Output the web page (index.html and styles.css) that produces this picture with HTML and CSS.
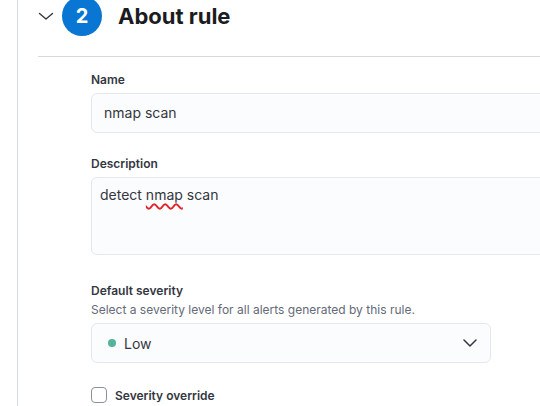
FILE: index.html
```html
<!DOCTYPE html>
<html>
<head>
<meta charset="utf-8">
<link rel="stylesheet" href="styles.css">
</head>
<body>
<div class="page">
  <div class="step">
    <div class="step-header">
      <span class="toggle">
        <svg width="16" height="16" viewBox="0 0 16 16"><path d="M1.5 5.5 L8 11 L14.5 5.5" fill="none" stroke="#343741" stroke-width="1.4" stroke-linecap="round" stroke-linejoin="round"/></svg>
      </span>
      <span class="step-number">2</span>
      <h2 class="step-title">About rule</h2>
    </div>
    <div class="form">
      <div class="row row-name">
        <label class="label">Name</label>
        <div class="input">nmap scan</div>
      </div>
      <div class="row row-desc">
        <label class="label">Description</label>
        <div class="textarea">detect <span class="misspelled">nmap</span> scan</div>
      </div>
      <div class="row row-sev">
        <label class="label">Default severity</label>
        <div class="help">Select a severity level for all alerts generated by this rule.</div>
        <div class="select">
          <span class="dot"></span>
          <span class="select-value">Low</span>
          <svg class="select-arrow" width="14" height="8" viewBox="0 0 14 8"><path d="M1 1 L7 7 L13 1" fill="none" stroke="#343741" stroke-width="1.5" stroke-linecap="round" stroke-linejoin="round"/></svg>
        </div>
      </div>
      <div class="row row-check">
        <span class="checkbox"></span>
        <span class="check-label">Severity override</span>
      </div>
    </div>
  </div>
</div>
</body>
</html>
```

FILE: styles.css
```css
html, body {
  margin: 0;
  padding: 0;
  background: #ffffff;
}
body {
  width: 540px;
  height: 406px;
  overflow: hidden;
  font-family: Inter, "Noto Sans", sans-serif;
  color: #343741;
}
.page {
  margin-left: 17px;
  border-left: 1px solid #d3dae6;
  height: 406px;
  overflow: hidden;
}
.step {
  margin-left: 20px;
}
.step-header {
  display: flex;
  align-items: center;
  height: 40px;
  margin-top: -4px;
  padding-bottom: 20px;
  border-bottom: 1px solid #d3dae6;
}
.toggle {
  width: 16px;
  height: 16px;
  display: flex;
  margin-right: 8px;
}
.step-number {
  width: 40px;
  height: 40px;
  border-radius: 50%;
  background: #0876d2;
  color: #ffffff;
  font-size: 20px;
  font-weight: 700;
  display: flex;
  align-items: center;
  justify-content: center;
  margin-right: 16px;
}
.step-title {
  margin: 0;
  font-size: 22px;
  font-weight: 700;
  color: #1a1c21;
  line-height: 32px;
}
.form {
  padding-left: 53px;
}
.label {
  display: block;
  font-size: 12px;
  line-height: 18px;
  font-weight: 600;
  color: #343741;
}
.row-name {
  padding-top: 14px;
}
.row-name .label,
.row-desc .label {
  margin-bottom: 4px;
}
.input {
  box-sizing: border-box;
  width: 600px;
  height: 40px;
  background: #fbfcfd;
  border: 1px solid #e3e7ef;
  border-radius: 6px;
  font-size: 14px;
  line-height: 38px;
  padding-left: 12px;
  color: #343741;
}
.row-desc {
  margin-top: 22px;
}
.textarea {
  box-sizing: border-box;
  width: 600px;
  height: 78px;
  background: #fbfcfd;
  border: 1px solid #e3e7ef;
  border-radius: 6px;
  font-size: 14px;
  line-height: 20px;
  padding: 7px 8px;
  color: #343741;
}
.misspelled {
  text-decoration: underline wavy #e0242a;
  text-decoration-thickness: 1.5px;
  text-underline-offset: 3px;
}
.row-sev {
  margin-top: 27px;
}
.help {
  font-size: 12px;
  line-height: 16px;
  color: #646a77;
  margin-top: 2px;
  margin-bottom: 5px;
}
.select {
  box-sizing: border-box;
  width: 400px;
  height: 40px;
  background: #fbfcfd;
  border: 1px solid #e3e7ef;
  border-radius: 6px;
  display: flex;
  align-items: center;
  padding-left: 16px;
  padding-right: 13px;
}
.dot {
  width: 8px;
  height: 8px;
  border-radius: 50%;
  background: #54b399;
  margin-right: 8px;
}
.select-value {
  font-size: 14px;
  color: #343741;
  flex: 1;
}
.select-arrow {
  display: block;
}
.row-check {
  margin-top: 24px;
  display: flex;
  align-items: center;
}
.checkbox {
  box-sizing: border-box;
  width: 16px;
  height: 16px;
  border: 1px solid #8a919e;
  border-radius: 4px;
  background: #ffffff;
  margin-right: 8px;
}
.check-label {
  font-size: 12px;
  font-weight: 600;
  color: #343741;
}
```
